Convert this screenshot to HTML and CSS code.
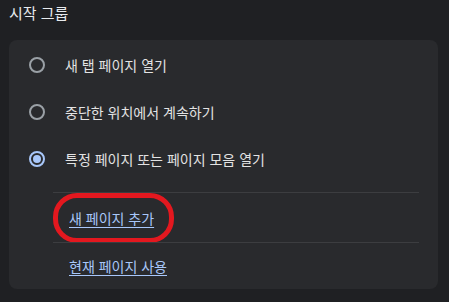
FILE: index.html
```html
<!DOCTYPE html>
<html lang="ko">
<head>
<meta charset="utf-8">
<link rel="stylesheet" href="styles.css">
</head>
<body>
<div class="page">
  <h2 class="title">시작 그룹</h2>
  <div class="card">
    <div class="row"><span class="radio"></span><span class="label">새 탭 페이지 열기</span></div>
    <div class="row"><span class="radio"></span><span class="label">중단한 위치에서 계속하기</span></div>
    <div class="row"><span class="radio checked"></span><span class="label">특정 페이지 또는 페이지 모음 열기</span></div>
    <div class="sub">
      <div class="link-row first"><a class="link" href="#">새 페이지 추가</a><span class="mark"></span></div>
      <div class="link-row last"><a class="link" href="#">현재 페이지 사용</a></div>
    </div>
  </div>
</div>
</body>
</html>
```

FILE: styles.css
```css
html, body {
  margin: 0;
  padding: 0;
  background: #1f2023;
}
body {
  font-family: "Noto Sans CJK KR", "Noto Sans", sans-serif;
  color: #e3e3e3;
  width: 449px;
  height: 302px;
  overflow: hidden;
}
.page {
  padding: 0 11px 0 9px;
}
.title {
  margin: 0;
  font-size: 15px;
  font-weight: 400;
  line-height: 26px;
  height: 40px;
  color: #e8eaed;
}
.card {
  background: #292a2d;
  border-radius: 8px;
  padding-top: 1px;
  height: 249px;
  box-sizing: border-box;
}
.row {
  height: 47px;
  display: flex;
  align-items: center;
  padding-left: 20px;
}
.radio {
  width: 16px;
  height: 16px;
  box-sizing: border-box;
  border: 2px solid #9aa0a6;
  border-radius: 50%;
  margin-right: 20px;
  flex: none;
  position: relative;
}
.radio.checked {
  border-color: #a8c7fa;
}
.radio.checked::after {
  content: "";
  position: absolute;
  left: 2px;
  top: 2px;
  width: 8px;
  height: 8px;
  border-radius: 50%;
  background: #a8c7fa;
}
.label {
  font-size: 14px;
  line-height: 20px;
}
.sub {
  margin: 10px 19px 0 44px;
}
.link-row {
  display: flex;
  align-items: center;
  padding-left: 16px;
  border-top: 1px solid #3c3d40;
  position: relative;
}
.link-row.first {
  height: 49px;
}
.link-row.last {
  height: 46px;
}
.link {
  color: #a8c7fa;
  font-size: 14px;
  line-height: 20px;
  text-decoration: underline;
  text-underline-offset: 3px;
}
.mark {
  position: absolute;
  left: 0;
  top: 0;
  width: 121px;
  height: 50px;
  box-sizing: border-box;
  border: 5px solid #e3181f;
  border-radius: 24px;
}
```
